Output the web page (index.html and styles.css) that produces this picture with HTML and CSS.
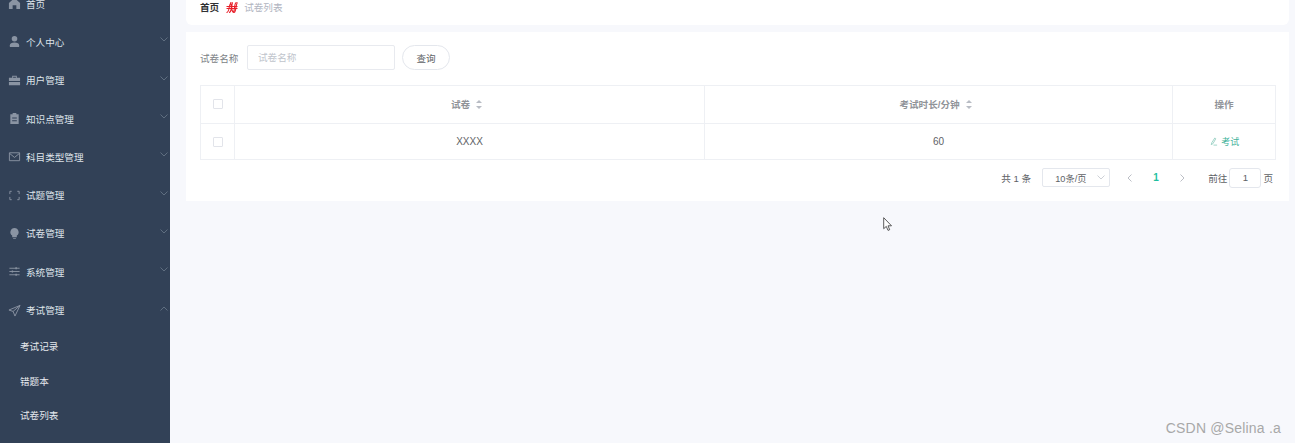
FILE: index.html
```html
<!DOCTYPE html>
<html>
<head>
  <meta charset="utf-8" />
  <title>试卷列表</title>
  <link rel="stylesheet" href="styles.css">
</head>
<body>
  <div class="app">
    <div class="sidebar">
      <ul class="menu">
        <li class="menu-item">
          <svg class="menu-icon" viewBox="0 0 14 14"><path d="M7 1 1 6.500V13h4V9h4v4h4V6.500z" fill="#8a94a3"/></svg>
          <span class="menu-text">首页</span>
        </li>
        <li class="menu-item">
          <svg class="menu-icon" viewBox="0 0 14 14"><circle cx="7" cy="4" r="3" fill="#8a94a3"/><path d="M2 13v-2c0-2 2-3 5-3s5 1 5 3v2z" fill="#8a94a3"/></svg>
          <span class="menu-text">个人中心</span>
          <svg class="arrow" viewBox="0 0 8 5"><path d="M.5.5 4 4 7.500.5" fill="none" stroke="#5f6e80"/></svg>
        </li>
        <li class="menu-item">
          <svg class="menu-icon" viewBox="0 0 14 14"><path d="M1 4h3.500V2h5v2H13v3.500H1zM1 8.500h12V12H1zM5.500 3v1h3V3z" fill="#8a94a3" fill-rule="evenodd"/></svg>
          <span class="menu-text">用户管理</span>
          <svg class="arrow" viewBox="0 0 8 5"><path d="M.5.5 4 4 7.500.5" fill="none" stroke="#5f6e80"/></svg>
        </li>
        <li class="menu-item">
          <svg class="menu-icon" viewBox="0 0 14 14"><path d="M2.500 2.500H5V1h4v1.500h2.500V13h-9zM4.500 6v1h5V6zM4.500 9v1h5V9z" fill="#8a94a3" fill-rule="evenodd"/></svg>
          <span class="menu-text">知识点管理</span>
          <svg class="arrow" viewBox="0 0 8 5"><path d="M.5.5 4 4 7.500.5" fill="none" stroke="#5f6e80"/></svg>
        </li>
        <li class="menu-item">
          <svg class="menu-icon" viewBox="0 0 14 14"><path d="M1.500 3h11v8.500h-11zM1.500 3.500 7 8l5.500-4.500" fill="none" stroke="#8a94a3"/></svg>
          <span class="menu-text">科目类型管理</span>
          <svg class="arrow" viewBox="0 0 8 5"><path d="M.5.5 4 4 7.500.5" fill="none" stroke="#5f6e80"/></svg>
        </li>
        <li class="menu-item">
          <svg class="menu-icon" viewBox="0 0 14 14"><path d="M4 2.500H2v3M10 2.500h2v3M4 11.500H2v-3M10 11.500h2v-3" fill="none" stroke="#8a94a3"/></svg>
          <span class="menu-text">试题管理</span>
          <svg class="arrow" viewBox="0 0 8 5"><path d="M.5.500 4 4 7.500.5" fill="none" stroke="#5f6e80"/></svg>
        </li>
        <li class="menu-item">
          <svg class="menu-icon" viewBox="0 0 14 14"><path d="M7 1a4.500 4.500 0 0 1 2.500 8.200V11h-5V9.200A4.500 4.500 0 0 1 7 1zM5.500 12h3v1h-3z" fill="#8a94a3"/></svg>
          <span class="menu-text">试卷管理</span>
          <svg class="arrow" viewBox="0 0 8 5"><path d="M.5.5 4 4 7.500.5" fill="none" stroke="#5f6e80"/></svg>
        </li>
        <li class="menu-item">
          <svg class="menu-icon" viewBox="0 0 14 14"><path d="M1.500 3.500h11M1.500 7h11M1.500 10.500h11" fill="none" stroke="#8a94a3"/><path d="M8 2.500h1.500v2H8zM4 6h1.500v2H4zM8 9.500h1.500v2H8z" fill="#8a94a3"/></svg>
          <span class="menu-text">系统管理</span>
          <svg class="arrow" viewBox="0 0 8 5"><path d="M.5.5 4 4 7.500.5" fill="none" stroke="#5f6e80"/></svg>
        </li>
        <li class="menu-item">
          <svg class="menu-icon" viewBox="0 0 14 14"><path d="M13 1.500 1 6.500l4.500 1.500L7.500 13zM5.500 8 13 1.500" fill="none" stroke="#8a94a3"/></svg>
          <span class="menu-text">考试管理</span>
          <svg class="arrow" viewBox="0 0 8 5"><path d="M.5 4.500 4 1l3.500 3.500" fill="none" stroke="#5f6e80"/></svg>
        </li>
      </ul>
      <ul class="submenu">
        <li class="submenu-item">考试记录</li>
        <li class="submenu-item">错题本</li>
        <li class="submenu-item">试卷列表</li>
      </ul>
    </div>

    <div class="main">
      <div class="crumb-card">
        <span class="crumb-home">首页</span>
        <svg class="crumb-sep" viewBox="0 0 12 11"><path d="M.5 10.500C2 10.500 2.500 9 3 6.500S4 .5 5.500.5M4 .8C5.500 .8 5.500 6 5 8S4 10.500 3 10.500M7 .5C6 .5 5.500 6 6 8s1 2.500 2 2.500M10.500.5C9.500.5 8.800 3 8.500 5.500S7.800 10.500 6.800 10.500M11.500.5C10.500 1 10 6 9.500 8S8.500 10.500 8 10.500M.5 4.500h11M.5 6.500h11" fill="none" stroke="#e8202a" stroke-width="1.100"/></svg>
        <span class="crumb-now">试卷列表</span>
      </div>

      <div class="list-card">
        <div class="search-bar">
          <span class="search-label">试卷名称</span>
          <input class="search-input" type="text" placeholder="试卷名称">
          <button class="search-btn" type="button">查询</button>
        </div>

        <table class="paper-table">
          <thead>
            <tr>
              <th class="col-check"><span class="checkbox"></span></th>
              <th class="col-name">试卷<span class="sort"></span></th>
              <th class="col-time">考试时长/分钟<span class="sort"></span></th>
              <th class="col-op">操作</th>
            </tr>
          </thead>
          <tbody>
            <tr>
              <td class="col-check"><span class="checkbox"></span></td>
              <td>XXXX</td>
              <td>60</td>
              <td class="op-cell">
                <svg class="op-icon" viewBox="0 0 10 10"><path d="M6.500 1 3 6.500 2.500 8.500 4.300 7.500 7.500 2zM5 9h4" fill="none" stroke="#7fc4b4" stroke-width=".8"/></svg>
                考试
              </td>
            </tr>
          </tbody>
        </table>

        <div class="pager">
          <span class="pager-total">共 1 条</span>
          <span class="pager-size">10条/页
            <svg class="pager-down" viewBox="0 0 8 5"><path d="M.5.5 4 4 7.500.5" fill="none" stroke="#c0c4cc" stroke-width=".8"/></svg>
          </span>
          <svg class="pager-arrow" viewBox="0 0 5 8"><path d="M4.500.5 1 4l3.500 3.500" fill="none" stroke="#b4b8c0" stroke-width=".9"/></svg>
          <span class="pager-num">1</span>
          <svg class="pager-arrow" viewBox="0 0 5 8"><path d="M.5.5 4 4 .5 7.500" fill="none" stroke="#b4b8c0" stroke-width=".9"/></svg>
          <span class="pager-goto">前往</span>
          <span class="pager-input">1</span>
          <span class="pager-unit">页</span>
        </div>
      </div>
    </div>
  </div>

  <svg class="cursor" viewBox="0 0 10 15"><path d="M.7.700v11l2.600-2.300 1.700 4 1.700-.7-1.700-3.900h3.500z" fill="#fff" stroke="#333" stroke-width=".8"/></svg>
  <div class="watermark">CSDN @Selina .a</div>
</body>
</html>
```

FILE: styles.css
```css
* {
  box-sizing: border-box;
}
html, body {
  height: 100%;
}
body {
  margin: 0;
  overflow: hidden;
  background-color: #f7f8fc;
  font-family: "Liberation Sans", "Noto Sans CJK SC", sans-serif;
  font-size: 9.6px;
  color: #606266;
}
ul {
  list-style: none;
  margin: 0;
  padding: 0;
}
.app {
  display: flex;
  height: 443px;
}
.sidebar {
  width: 170px;
  flex-shrink: 0;
  background-color: #324157;
  overflow: hidden;
}
.menu {
  margin-top: -15.5px;
}
.menu-item {
  display: flex;
  align-items: center;
  height: 38.3px;
  padding-left: 8px;
  color: #dfe4ea;
}
.menu-icon {
  width: 13px;
  height: 13px;
  margin-right: 5px;
  flex-shrink: 0;
}
.menu-text {
  flex: 1;
}
.arrow {
  width: 8px;
  height: 5px;
  margin-right: 2px;
  margin-top: -4px;
}
.submenu-item {
  display: flex;
  align-items: center;
  height: 34.3px;
  padding-left: 20px;
  color: #e6e9ee;
}

.main {
  flex: 1;
  padding-right: 6px;
  padding-left: 16px;
}
.crumb-card {
  display: flex;
  align-items: center;
  height: 41px;
  margin-top: -16px;
  padding: 5px 14px 0;
  background-color: #fff;
  border-radius: 0 0 6px 6px;
}
.crumb-home {
  color: #303133;
  font-weight: 700;
}
.crumb-sep {
  width: 12px;
  height: 11px;
  margin: 0 6px 0 7px;
}
.crumb-now {
  color: #b0b4c0;
}
.list-card {
  margin-top: 7px;
  height: 169px;
  padding: 13px 13px 0 14px;
  background-color: #fff;
}
.search-bar {
  display: flex;
  align-items: center;
  height: 25px;
  margin-bottom: 15px;
}
.search-label {
  width: 47px;
  color: #7c7f86;
}
.search-input {
  width: 148px;
  height: 25px;
  padding: 0 10px;
  border: 1px solid #e8eaef;
  border-radius: 2px;
  outline: none;
  font-family: inherit;
  font-size: 9.6px;
}
.search-input::placeholder {
  color: #c0c4cc;
}
.search-btn {
  width: 48px;
  height: 25px;
  margin-left: 7px;
  padding: 0;
  border: 1px solid #e4e7ed;
  border-radius: 13px;
  background-color: #fff;
  font-family: inherit;
  font-size: 9.6px;
  color: #606266;
}

.paper-table {
  width: 1075px;
  table-layout: fixed;
  border-collapse: collapse;
  border: 1px solid #eef0f4;
}
.paper-table th,
.paper-table td {
  padding: 0;
  border: 1px solid #eef0f4;
  text-align: center;
  font-weight: 400;
}
.paper-table th {
  height: 38px;
  padding-bottom: 2px;
  color: #909399;
  font-weight: 700;
}
.paper-table td {
  height: 36px;
  padding-bottom: 1px;
  font-size: 10px;
  color: #606266;
}
.col-check {
  width: 34px;
}
.col-name {
  width: 470px;
}
.col-time {
  width: 468px;
}
.col-op {
  width: 103px;
}
.checkbox {
  display: inline-block;
  width: 10px;
  height: 10px;
  border: 1px solid #e2e4ea;
  border-radius: 1px;
  vertical-align: middle;
}
.sort {
  display: inline-block;
  position: relative;
  width: 12px;
  height: 9px;
  margin-left: 6px;
  vertical-align: middle;
}
.sort::before,
.sort::after {
  content: "";
  position: absolute;
  left: 0;
  border-left: 3px solid transparent;
  border-right: 3px solid transparent;
}
.sort::before {
  top: 0;
  border-bottom: 3.500px solid #b8bcc4;
}
.sort::after {
  bottom: 0;
  border-top: 3.500px solid #b8bcc4;
}
.paper-table .op-cell {
  font-size: 9px;
  color: #3fb39a;
}
.op-icon {
  width: 9px;
  height: 9px;
  vertical-align: -1px;
  margin-right: 1px;
}

.pager {
  display: flex;
  align-items: center;
  height: 21px;
  margin-top: 7px;
  color: #606266;
}
.pager-total {
  margin-left: auto;
}
.pager-size {
  display: flex;
  align-items: center;
  justify-content: space-between;
  width: 68px;
  height: 19px;
  margin-left: 11px;
  padding: 0 4px 0 12px;
  border: 1px solid #e4e7ed;
  border-radius: 2px;
  font-size: 9.2px;
}
.pager-down {
  width: 8px;
  height: 5px;
}
.pager-arrow {
  width: 5px;
  height: 8px;
  margin-left: 0;
}
.pager-size + .pager-arrow {
  margin-left: 17px;
}
.pager-num {
  width: 6px;
  margin-left: 21px;
  margin-right: 21px;
  font-size: 10px;
  color: #1fbf9f;
  font-weight: 700;
}
.pager-goto {
  margin-left: 23px;
}
.pager-input {
  width: 32px;
  height: 20px;
  margin-left: 2px;
  border: 1px solid #e4e7ed;
  border-radius: 3px;
  line-height: 18px;
  text-align: center;
}
.pager-unit {
  margin-left: 2px;
  margin-right: 3px;
}

.cursor {
  position: absolute;
  left: 883px;
  top: 217px;
  width: 10px;
  height: 15px;
}
.watermark {
  position: absolute;
  right: 14px;
  bottom: 7px;
  font-family: "Liberation Sans", sans-serif;
  font-size: 14px;
  letter-spacing: .2px;
  color: #a8a8a8;
}
```
